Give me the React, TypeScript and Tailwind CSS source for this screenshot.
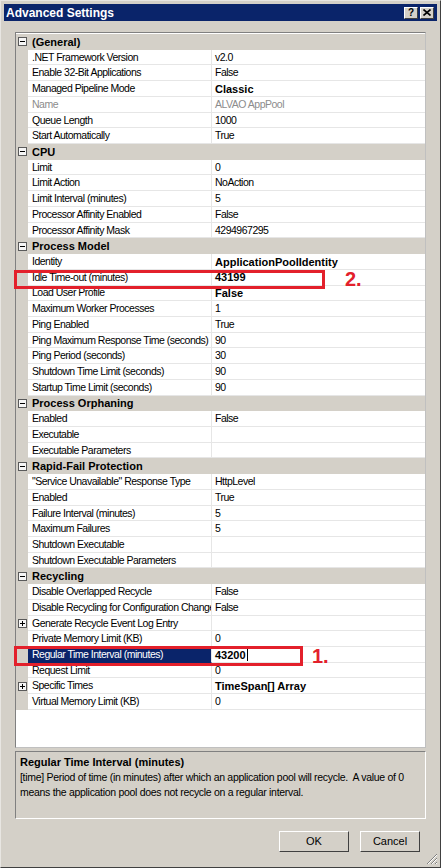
const font = { fontFamily: '"Liberation Sans", Arial, sans-serif' };

type Prop = {
  name: string;
  value?: string;
  bold?: boolean;
  gray?: boolean;
  expand?: boolean;
  selected?: boolean;
};

type Section = { title: string; props: Prop[] };

const sections: Section[] = [
  {
    title: "(General)",
    props: [
      { name: ".NET Framework Version", value: "v2.0" },
      { name: "Enable 32-Bit Applications", value: "False" },
      { name: "Managed Pipeline Mode", value: "Classic", bold: true },
      { name: "Name", value: "ALVAO AppPool", gray: true },
      { name: "Queue Length", value: "1000" },
      { name: "Start Automatically", value: "True" },
    ],
  },
  {
    title: "CPU",
    props: [
      { name: "Limit", value: "0" },
      { name: "Limit Action", value: "NoAction" },
      { name: "Limit Interval (minutes)", value: "5" },
      { name: "Processor Affinity Enabled", value: "False" },
      { name: "Processor Affinity Mask", value: "4294967295" },
    ],
  },
  {
    title: "Process Model",
    props: [
      { name: "Identity", value: "ApplicationPoolIdentity", bold: true },
      { name: "Idle Time-out (minutes)", value: "43199", bold: true },
      { name: "Load User Profile", value: "False", bold: true },
      { name: "Maximum Worker Processes", value: "1" },
      { name: "Ping Enabled", value: "True" },
      { name: "Ping Maximum Response Time (seconds)", value: "90" },
      { name: "Ping Period (seconds)", value: "30" },
      { name: "Shutdown Time Limit (seconds)", value: "90" },
      { name: "Startup Time Limit (seconds)", value: "90" },
    ],
  },
  {
    title: "Process Orphaning",
    props: [
      { name: "Enabled", value: "False" },
      { name: "Executable" },
      { name: "Executable Parameters" },
    ],
  },
  {
    title: "Rapid-Fail Protection",
    props: [
      { name: '"Service Unavailable" Response Type', value: "HttpLevel" },
      { name: "Enabled", value: "True" },
      { name: "Failure Interval (minutes)", value: "5" },
      { name: "Maximum Failures", value: "5" },
      { name: "Shutdown Executable" },
      { name: "Shutdown Executable Parameters" },
    ],
  },
  {
    title: "Recycling",
    props: [
      { name: "Disable Overlapped Recycle", value: "False" },
      { name: "Disable Recycling for Configuration Changes", value: "False" },
      { name: "Generate Recycle Event Log Entry", expand: true },
      { name: "Private Memory Limit (KB)", value: "0" },
      { name: "Regular Time Interval (minutes)", value: "43200", bold: true, selected: true },
      { name: "Request Limit", value: "0" },
      { name: "Specific Times", value: "TimeSpan[] Array", bold: true, expand: true },
      { name: "Virtual Memory Limit (KB)", value: "0" },
    ],
  },
];

function Box({ plus }: { plus?: boolean }) {
  return (
    <div className="relative w-[9px] h-[9px] border border-[#5a5a5a] bg-[#f6f6f6]">
      <div className="absolute left-[1px] top-[3px] w-[5px] h-[1px] bg-black" />
      {plus && <div className="absolute left-[3px] top-[1px] w-[1px] h-[5px] bg-black" />}
    </div>
  );
}

function CategoryRow({ title }: { title: string }) {
  return (
    <div className="flex items-center h-[15.72px] bg-[#d4d0c8]">
      <div className="w-[12px] flex justify-center">
        <Box />
      </div>
      <div className="pl-[4px] font-bold text-[11px] text-black">{title}</div>
    </div>
  );
}

function PropRow({ p }: { p: Prop }) {
  return (
    <div className="flex h-[15.72px] text-[10.5px] tracking-[-0.5px]">
      <div className="w-[12px] bg-[#d4d0c8] flex items-center justify-center">
        {p.expand && <Box plus />}
      </div>
      <div
        className={`w-[184px] flex items-center pl-[4px] pt-[1px] border-b border-r overflow-hidden whitespace-nowrap ${
          p.selected
            ? "bg-[#0a246a] text-white border-b-[#0a246a] border-r-[#e6e6e6]"
            : "bg-white border-[#e6e6e6]"
        } ${p.gray ? "text-[#8c8c8c]" : p.selected ? "" : "text-black"}`}
      >
        {p.name}
      </div>
      <div
        className={`flex-1 flex items-center pl-[3px] pt-[1px] bg-white border-b border-[#e6e6e6] whitespace-nowrap ${
          p.bold ? "font-bold text-[11px] tracking-normal" : ""
        } ${p.gray ? "text-[#8c8c8c]" : "text-black"}`}
      >
        {p.value}
        {p.selected && <span className="ml-[1px] w-[1px] h-[13px] bg-black" />}
      </div>
    </div>
  );
}

function TitleButton({ children }: { children: React.ReactNode }) {
  return (
    <div className="w-[14px] h-[12px] bg-[#d4d0c8] border border-t-white border-l-white border-r-[#404040] border-b-[#404040] flex items-center justify-center text-[10px] font-bold text-black leading-none">
      {children}
    </div>
  );
}

export default function App() {
  return (
    <div
      className="relative w-[441px] h-[868px] bg-[#d4d0c8] border border-t-[#e8e6e2] border-l-[#e8e6e2] border-r-[#404040] border-b-[#404040] flex flex-col"
      style={font}
    >
      <div className="mx-[3px] mt-[3px] h-[17px] bg-[#0a246a] flex items-center justify-between pl-[2px] pr-[3px]">
        <span className="text-white font-bold text-[12px]">Advanced Settings</span>
        <div className="flex gap-[2px]">
          <TitleButton>?</TitleButton>
          <TitleButton>
            <svg width="8" height="7" viewBox="0 0 8 7">
              <path d="M0.5 0.5 L7.5 6.5 M7.5 0.5 L0.5 6.5" stroke="black" strokeWidth="1.6" />
            </svg>
          </TitleButton>
        </div>
      </div>

      <div className="flex flex-col px-[14px] pt-[11px]">
        <div className="h-[716px] pt-[1px] border border-t-[#808080] border-l-[#808080] border-r-[#c0c0c0] border-b-[#c0c0c0] bg-white flex flex-col">
          {sections.map((s) => (
            <div key={s.title} className="flex flex-col">
              <CategoryRow title={s.title} />
              {s.props.map((p, i) => (
                <PropRow key={i} p={p} />
              ))}
            </div>
          ))}
        </div>

        <div className="mt-[3px] h-[68px] border border-t-[#808080] border-l-[#808080] border-r-white border-b-white px-[4px] pt-[3px] text-[10.5px] tracking-[-0.3px] text-black">
          <div className="font-bold text-[11px] tracking-normal leading-[15px]">Regular Time Interval (minutes)</div>
          <div className="leading-[15px]">
            [time] Period of time (in minutes) after which an application pool will recycle.&nbsp; A value of 0
            means the application pool does not recycle on a regular interval.
          </div>
        </div>

        <div className="mt-[12px] flex justify-end gap-[11px] pr-[6px] text-[11px] text-black">
          <div className="w-[70px] h-[21px] flex items-center justify-center border border-t-white border-l-white border-r-[#404040] border-b-[#404040]">
            OK
          </div>
          <div className="w-[60px] h-[21px] flex items-center justify-center border border-t-white border-l-white border-r-[#404040] border-b-[#404040]">
            Cancel
          </div>
        </div>
      </div>

      {/* annotations */}
      <div className="absolute left-[13px] top-[269px] w-[311px] h-[19px] border-[3px] border-[#e3202b]" />
      <div className="absolute left-[344px] top-[268px] text-[20px] font-bold text-[#e3202b] leading-none">2.</div>
      <div className="absolute left-[13px] top-[645px] w-[289px] h-[20px] border-[3px] border-[#e3202b]" />
      <div className="absolute left-[311px] top-[645px] text-[20px] font-bold text-[#e3202b] leading-none">1.</div>

      <svg className="absolute right-[2px] bottom-[2px]" width="12" height="12" viewBox="0 0 12 12">
        <path d="M11 1 L1 11 M11 5 L5 11 M11 9 L9 11" stroke="#808080" strokeWidth="1" />
        <path d="M11 2 L2 11 M11 6 L6 11 M11 10 L10 11" stroke="white" strokeWidth="1" />
      </svg>
    </div>
  );
}
